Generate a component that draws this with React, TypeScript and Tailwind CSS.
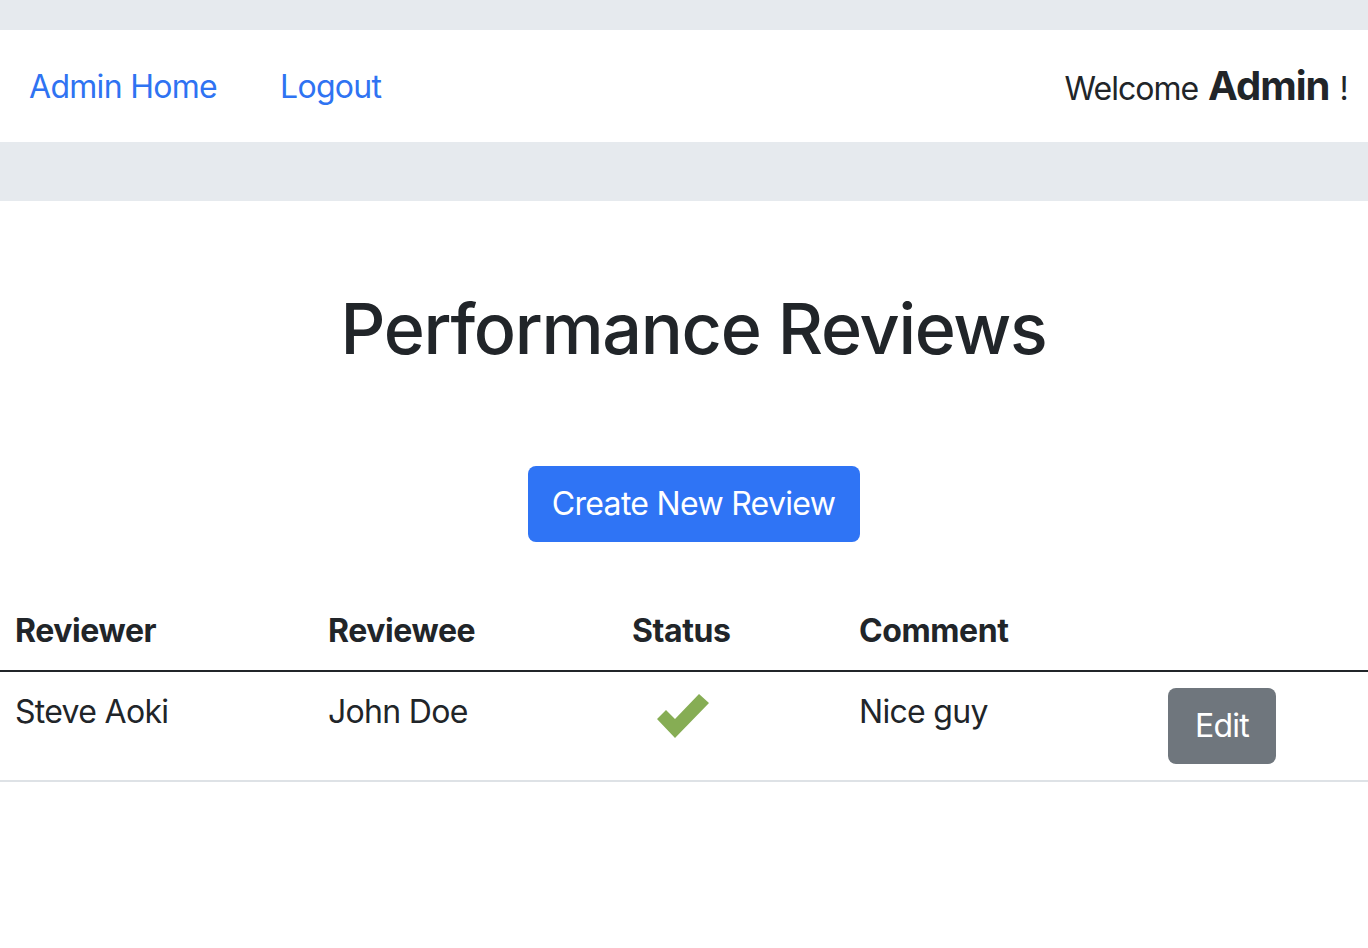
import React from "react";

const font = { fontFamily: 'Inter, "Noto Sans", "Liberation Sans", sans-serif' };

function Check() {
  return (
    <svg width="54" height="46" viewBox="0 0 54 46" aria-hidden="true">
      <path d="M0 25 L9 16 L18 25 L42 0 L52 9 L18 44 Z" fill="#86ad54" />
    </svg>
  );
}

export default function App() {
  return (
    <div className="min-h-[948px] bg-white text-[#212529] tracking-[-0.7px]" style={font}>
      <div className="bg-[#e6eaee] pt-[30px]">
        <nav className="flex h-[112px] items-center bg-white pl-[29px] pr-[20px]">
          <a href="#" className="mt-[2px] text-[32px] leading-none text-[#2f73f2]">Admin Home</a>
          <a href="#" className="ml-[63px] mt-[2px] text-[32px] leading-none text-[#2f73f2]">Logout</a>
          <div className="ml-auto flex items-baseline text-[32px] leading-none">
            <span className="tracking-[-1px]">Welcome</span>
            <span className="ml-[10px] text-[40px] font-bold tracking-[-1px]">Admin</span>
            <span className="ml-[10px]">!</span>
          </div>
        </nav>
        <div className="h-[59px]" />
      </div>
      <main className="flex flex-col items-center">
        <div className="flex flex-col items-center pl-[19px]">
          <h1 className="mt-[86px] text-[70px] font-medium leading-[84px] tracking-[-1.3px]">Performance Reviews</h1>
          <button className="mt-[95px] h-[76px] w-[332px] rounded-[8px] bg-[#2f74f5] text-[32px] text-white">
            Create New Review
          </button>
        </div>
        <table className="mt-[50px] w-full border-collapse text-left text-[32px]">
          <thead>
            <tr className="border-b-2 border-[#212529]">
              <th className="w-[313px] px-[15px] pb-[15px] pt-[15px] font-bold tracking-[-0.4px]">Reviewer</th>
              <th className="w-[304px] px-[15px] pb-[15px] pt-[15px] font-bold tracking-[-0.4px]">Reviewee</th>
              <th className="w-[227px] px-[15px] pb-[15px] pt-[15px] font-bold tracking-[-0.4px]">Status</th>
              <th className="w-[309px] px-[15px] pb-[15px] pt-[15px] font-bold tracking-[-0.4px]">Comment</th>
              <th className="px-[15px] pb-[15px] pt-[15px]"></th>
            </tr>
          </thead>
          <tbody>
            <tr className="border-b-2 border-[#dee2e6]">
              <td className="px-[15px] pb-[16px] pt-[16px] align-top">Steve Aoki</td>
              <td className="px-[15px] pb-[16px] pt-[16px] align-top">John Doe</td>
              <td className="px-[15px] pb-[16px] pt-[22px] align-top">
                <div className="ml-[25px]"><Check /></div>
              </td>
              <td className="px-[15px] pb-[16px] pt-[16px] align-top">Nice guy</td>
              <td className="px-[15px] pb-[16px] pt-[16px] align-top">
                <button className="h-[76px] w-[108px] rounded-[8px] bg-[#6f767d] text-[32px] text-white">Edit</button>
              </td>
            </tr>
          </tbody>
        </table>
      </main>
    </div>
  );
}
